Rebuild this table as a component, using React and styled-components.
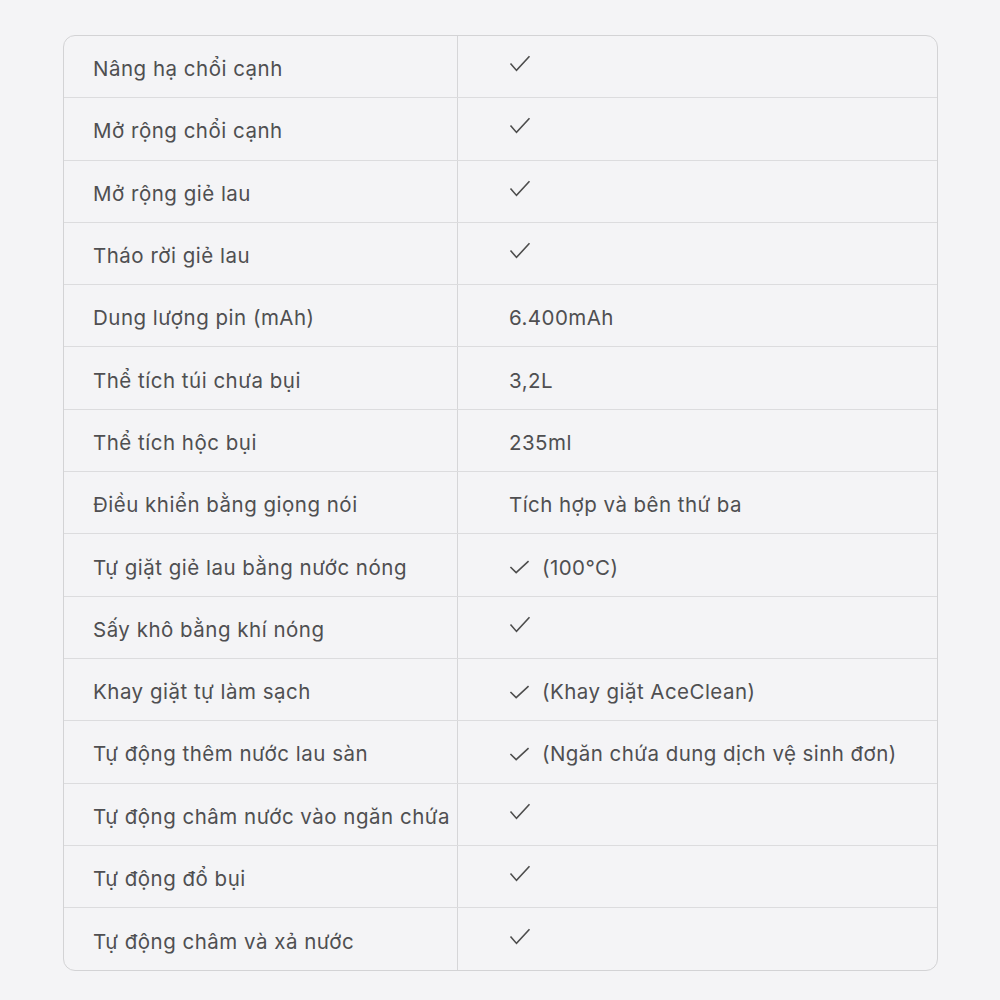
import styled, { createGlobalStyle } from "styled-components"

const GlobalStyle = createGlobalStyle`
body {
    margin: 0;
    background: #f4f4f6;
    font-family: 'Inter', 'Liberation Sans', sans-serif;
}
`

const rows = [
    ["Nâng hạ chổi cạnh", true, ""],
    ["Mở rộng chổi cạnh", true, ""],
    ["Mở rộng giẻ lau", true, ""],
    ["Tháo rời giẻ lau", true, ""],
    ["Dung lượng pin (mAh)", false, "6.400mAh"],
    ["Thể tích túi chưa bụi", false, "3,2L"],
    ["Thể tích hộc bụi", false, "235ml"],
    ["Điều khiển bằng giọng nói", false, "Tích hợp và bên thứ ba"],
    ["Tự giặt giẻ lau bằng nước nóng", true, "(100°C)"],
    ["Sấy khô bằng khí nóng", true, ""],
    ["Khay giặt tự làm sạch", true, "(Khay giặt AceClean)"],
    ["Tự động thêm nước lau sàn", true, "(Ngăn chứa dung dịch vệ sinh đơn)"],
    ["Tự động châm nước vào ngăn chứa", true, ""],
    ["Tự động đổ bụi", true, ""],
    ["Tự động châm và xả nước", true, ""],
]

function Check({ solo }) {
    return (
        <CheckIcon $solo={solo} viewBox="0 0 22 16" width={solo ? 22 : 21} height={solo ? 17 : 14} preserveAspectRatio="none">
            <polyline points="1.5,8 7.5,14.5 20.5,1.2" fill="none" stroke="#4d4d4d" strokeWidth="1.6" vectorEffect="non-scaling-stroke" />
        </CheckIcon>
    )
}

export default function App() {
    return (
        <>
            <GlobalStyle />
            <Page>
                <Table>
                    {rows.map(([label, check, value], i) => (
                        <Row key={i} $last={i === rows.length - 1}>
                            <Label>{label}</Label>
                            <Value>
                                {check && <Check solo={!value} />}
                                {value && <span>{value}</span>}
                            </Value>
                        </Row>
                    ))}
                </Table>
            </Page>
        </>
    )
}

const Page = styled.div`
width: 1000px;
height: 1000px;
padding: 35px 0 0 63px;
box-sizing: border-box;
`
const Table = styled.div`
width: 875px;
box-sizing: border-box;
border: 1.5px solid #d3d3d5;
border-radius: 12px;
overflow: hidden;
`
const Row = styled.div`
display: grid;
grid-template-columns: 394px 1fr;
height: 62.3px;
box-sizing: border-box;
border-bottom: ${p => (p.$last ? "none" : "1px solid #dcdcde")};
`
const Label = styled.div`
display: flex;
align-items: center;
padding: 4px 0 0 29px;
border-right: 1px solid #d6d6d8;
font-size: 20.5px;
letter-spacing: 0.5px;
color: #4f4f51;
white-space: nowrap;
`
const Value = styled.div`
display: flex;
align-items: center;
gap: 12px;
padding: 4px 0 0 51px;
font-size: 20.5px;
letter-spacing: 0.45px;
color: #4f4f51;
white-space: nowrap;
`
const CheckIcon = styled.svg`
flex-shrink: 0;
margin-top: ${p => (p.$solo ? "-10px" : "0")};
`
